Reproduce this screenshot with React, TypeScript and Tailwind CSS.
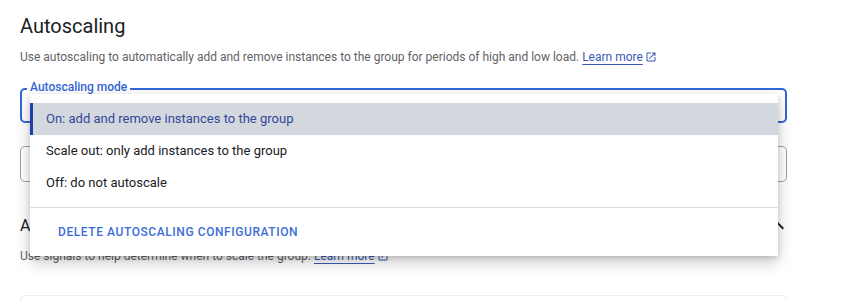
import React from 'react';

const font = { fontFamily: 'Roboto, "Liberation Sans", sans-serif' };

function OpenInNew({ className }: { className?: string }) {
  return (
    <svg viewBox="0 0 24 24" className={className} fill="currentColor">
      <path d="M19 19H5V5h7V3H5a2 2 0 0 0-2 2v14a2 2 0 0 0 2 2h14c1.1 0 2-.9 2-2v-7h-2v7zM14 3v2h3.59l-9.83 9.83 1.41 1.41L19 6.41V10h2V3h-7z" />
    </svg>
  );
}

function LearnMore() {
  return (
    <a className="inline-flex items-center gap-[2px] text-[#3c59b3]">
      <span className="underline decoration-[#3c59b3] underline-offset-[3px]">Learn more</span>
      <OpenInNew className="w-3 h-3" />
    </a>
  );
}

const options = [
  'On: add and remove instances to the group',
  'Scale out: only add instances to the group',
  'Off: do not autoscale',
];

export default function App() {
  return (
    <div className="w-[849px] h-[301px] overflow-hidden bg-white text-[#202124]" style={font}>
      <div className="ml-5 w-[767px] pt-3">
        <h1 className="text-[20px] leading-7 font-normal">Autoscaling</h1>
        <p className="mt-[9px] text-xs leading-4 text-[#5f6368]">
          Use autoscaling to automatically add and remove instances to the group for periods of high and low load.{' '}
          <LearnMore />
        </p>

        {/* Autoscaling mode field with open menu */}
        <div className="relative mt-[23px]">
          <div className="h-[35px] rounded-[5px] border-2 border-[#3367d6]" />
          <span className="absolute -top-[9px] left-[7px] bg-white px-[3px] text-xs leading-4 font-medium text-[#3367d6]">
            Autoscaling mode
          </span>

          <div className="absolute left-[10px] top-[6px] z-10 w-[748px] bg-white pt-[9px] shadow-[0_6px_14px_rgba(0,0,0,0.22),0_2px_5px_rgba(0,0,0,0.12)]">
            {options.map((opt, i) => (
              <div
                key={opt}
                className={
                  i === 0
                    ? 'flex h-8 items-center border-l-[3px] border-[#1e3ea8] bg-[#d3d7de] pl-[13px] text-[13px] text-[#33479a]'
                    : 'flex h-8 items-center pl-4 text-[13px] text-[#202124]'
                }
              >
                {opt}
              </div>
            ))}
            <div className="mt-2 border-t border-[#dadce0]" />
            <div className="flex h-[48px] items-center pl-7">
              <span className="text-xs font-medium tracking-[0.048em] text-[#3b6dd6]">
                DELETE AUTOSCALING CONFIGURATION
              </span>
            </div>
          </div>
        </div>

        <div className="mt-[23px] h-[36px] rounded-[5px] border border-[#9aa0a6]" />

        <div className="mt-[32px] flex items-center justify-between">
          <h2 className="text-base leading-6 font-normal">Autoscaling signals</h2>
          <svg viewBox="0 0 24 24" className="-mr-[3px] h-6 w-6" fill="currentColor">
            <path d="M12 8l-6 6 1.41 1.41L12 10.83l4.59 4.58L18 14z" />
          </svg>
        </div>
        <p className="mt-[10px] text-xs leading-4 text-[#5f6368]">
          Use signals to help determine when to scale the group. <LearnMore />
        </p>

        <div className="mt-[31px] h-10 rounded-[5px] border border-[#eceef1]" />
      </div>
    </div>
  );
}
